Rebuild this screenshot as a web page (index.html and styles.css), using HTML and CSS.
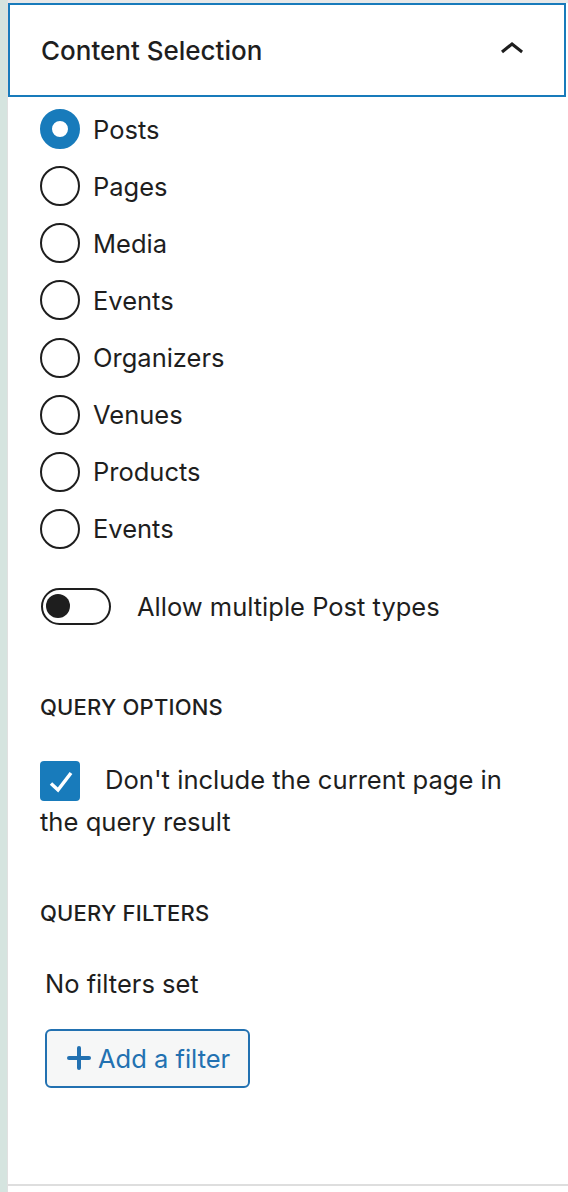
FILE: index.html
```html
<!DOCTYPE html>
<html lang="en">
<head>
    <meta charset="UTF-8">
    <meta name="viewport" content="width=device-width, initial-scale=1.0">
    <title>Content Selection</title>
    <link rel="stylesheet" href="styles.css">
</head>
<body>
    <div class="frame">
        <div class="rail"></div>

        <div class="sidebar">
            <div class="panel">
                <button class="panel-header" type="button">
                    <span>Content Selection</span>
                    <svg class="chevron" viewBox="0 0 24 24" width="48" height="48" aria-hidden="true">
                        <path d="M6.5 12.4L12 8l5.5 4.4-.9 1.2L12 10l-4.5 3.6-1-1.2z"></path>
                    </svg>
                </button>

                <div class="panel-body">
                    <!-- post type radios -->
                    <div class="radios">
                        <label class="radio-row"><span class="radio checked"></span>Posts</label>
                        <label class="radio-row"><span class="radio"></span>Pages</label>
                        <label class="radio-row"><span class="radio"></span>Media</label>
                        <label class="radio-row"><span class="radio"></span>Events</label>
                        <label class="radio-row"><span class="radio"></span>Organizers</label>
                        <label class="radio-row"><span class="radio"></span>Venues</label>
                        <label class="radio-row"><span class="radio"></span>Products</label>
                        <label class="radio-row"><span class="radio"></span>Events</label>
                    </div>

                    <label class="toggle-row">
                        <span class="toggle"><span class="knob"></span></span>
                        Allow multiple Post types
                    </label>

                    <h3 class="section-title options-title">Query options</h3>

                    <p class="check-row">
                        <span class="checkbox">
                            <svg viewBox="0 0 40 40" width="40" height="40" aria-hidden="true">
                                <polyline points="11,22.5 18,29 31,12"></polyline>
                            </svg>
                        </span>Don't include the current page in the query result
                    </p>

                    <h3 class="section-title filters-title">Query filters</h3>

                    <p class="empty">No filters set</p>

                    <button class="add-filter" type="button">
                        <svg viewBox="0 0 24 24" width="24" height="24" aria-hidden="true">
                            <line x1="12" y1="2" x2="12" y2="22"></line>
                            <line x1="2" y1="12" x2="22" y2="12"></line>
                        </svg>
                        Add a filter
                    </button>
                </div>
            </div>
        </div>
    </div>
</body>
</html>
```

FILE: styles.css
```css
* {
    box-sizing: border-box;
}

body {
    margin: 0;
    background: #fff;
    color: #1e1e1e;
    font-family: Inter, "Noto Sans", sans-serif;
}

.frame {
    display: flex;
    min-height: 1192px;
}

.rail {
    width: 8px;
    background: #d5e4df;
    border-right: 1px solid #e0e0e0;
}

.sidebar {
    flex: 1;
    border-top: 3px solid #e8e8e8;
}

.panel {
    border-bottom: 2px solid #dedede;
}

/* header */
.panel-header {
    display: flex;
    align-items: center;
    justify-content: space-between;
    width: calc(100% - 2px);
    height: 94px;
    margin: 0;
    padding: 0 28px 0 31px;
    border: 2px solid #187bbb;
    background: #fff;
    color: #1e1e1e;
    font-family: inherit;
    font-size: 26px;
    font-weight: 500;
    text-align: left;
    cursor: pointer;
}

.chevron {
    fill: #1e1e1e;
}

.panel-body {
    padding: 12px 32px 96px 32px;
}

/* radios */
.radios {
    display: flex;
    flex-direction: column;
    gap: 17.15px;
}

.radio-row {
    display: flex;
    align-items: center;
    height: 40px;
    font-size: 25.5px;
}

.radio {
    width: 40px;
    height: 40px;
    margin-right: 13px;
    border: 2.5px solid #1e1e1e;
    border-radius: 50%;
    flex-shrink: 0;
}

.radio.checked {
    border: 12px solid #187bbb;
    background: #fff;
}

/* toggle */
.toggle-row {
    display: flex;
    align-items: center;
    gap: 26px;
    margin-top: 39px;
    padding-left: 1px;
    font-size: 25.5px;
}

.toggle {
    display: flex;
    align-items: center;
    width: 70px;
    height: 37px;
    padding-left: 3px;
    border: 2px solid #1e1e1e;
    border-radius: 19px;
}

.knob {
    width: 24px;
    height: 24px;
    border-radius: 50%;
    background: #1e1e1e;
}

/* sections */
.section-title {
    margin: 0;
    font-size: 22px;
    font-weight: 500;
    line-height: 26px;
    text-transform: uppercase;
    letter-spacing: 0.2px;
}

.options-title {
    margin-top: 69px;
}

.filters-title {
    margin-top: 57px;
}

.check-row {
    margin: 39px 0 0;
    font-size: 25.6px;
    line-height: 42px;
}

.checkbox {
    display: inline-block;
    width: 40px;
    height: 40px;
    margin-right: 25px;
    border-radius: 4px;
    background: #187bbb;
    vertical-align: -12px;
}

.checkbox svg {
    display: block;
    fill: none;
    stroke: #fff;
    stroke-width: 3.5;
}

.empty {
    margin: 37px 0 0;
    padding-left: 5px;
    font-size: 25.5px;
    line-height: 42px;
}

.add-filter {
    display: flex;
    align-items: center;
    gap: 7px;
    width: 205px;
    height: 59px;
    margin: 24px 0 0 5px;
    padding: 0 0 0 20px;
    border: 2px solid #2271b1;
    border-radius: 6px;
    background: #f6f7f7;
    color: #2271b1;
    font-family: inherit;
    font-size: 25.5px;
    cursor: pointer;
}

.add-filter svg {
    stroke: #2271b1;
    stroke-width: 4;
    stroke-linecap: round;
}
```
